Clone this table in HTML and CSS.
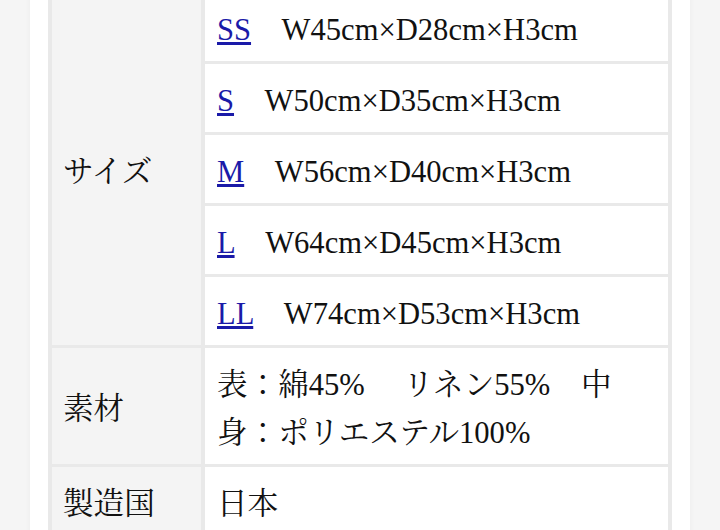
FILE: index.html
```html
<!DOCTYPE html>
<html lang="ja">
<head>
  <meta charset="UTF-8" />
  <meta name="viewport" content="width=device-width, initial-scale=1.0"/>
  <title>商品詳細</title>
  <link rel="stylesheet" href="styles.css">
</head>
<body>
  <div class="page">
    <table class="spec">
      <tr>
        <th rowspan="5">サイズ</th>
        <td><a href="#">SS</a>&#12288;W45cm×D28cm×H3cm</td>
      </tr>
      <tr>
        <td><a href="#">S</a>&#12288;W50cm×D35cm×H3cm</td>
      </tr>
      <tr>
        <td><a href="#">M</a>&#12288;W56cm×D40cm×H3cm</td>
      </tr>
      <tr>
        <td><a href="#">L</a>&#12288;W64cm×D45cm×H3cm</td>
      </tr>
      <tr>
        <td><a href="#">LL</a>&#12288;W74cm×D53cm×H3cm</td>
      </tr>
      <tr>
        <th>素材</th>
        <td>表：綿45%&#12288; リネン55%&#12288;中<br>身：ポリエステル100%</td>
      </tr>
      <tr>
        <th>製造国</th>
        <td>日本</td>
      </tr>
    </table>
  </div>
</body>
</html>
```

FILE: styles.css
```css
body {
  margin: 0;
  background-color: #f5f5f5;
  font-family: "Liberation Serif", "Noto Serif CJK JP", "Noto Sans CJK JP", serif;
  color: #111;
  height: 530px;
  overflow: hidden;
}
.page {
  width: 624px;
  margin: 0 30px;
  padding: 0 18px;
  background: white;
  min-height: 530px;
  box-shadow: 0 0 6px rgba(0,0,0,0.04);
}
.spec {
  width: 624px;
  margin-top: -10px;
  border-spacing: 4px 3px;
  background-color: #e9e9e9;
  font-size: 30.6px;
  line-height: 48px;
}
.spec th,
.spec td {
  padding: 13px 12px 7px;
  text-align: left;
  font-weight: normal;
  vertical-align: middle;
}
.spec th {
  width: 126px;
  background-color: #f4f4f4;
  padding-left: 11px;
}
.spec td {
  background-color: white;
}
.spec a {
  color: #1a1aa8;
  text-decoration: underline;
}
```
